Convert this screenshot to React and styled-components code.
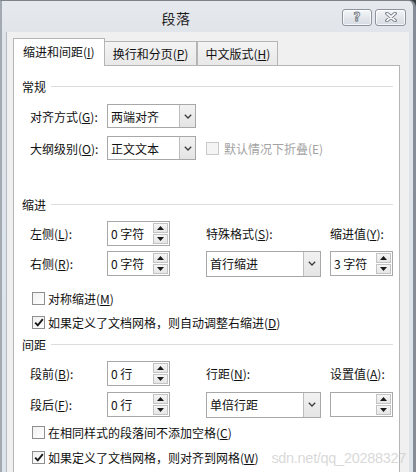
import React from 'react';
import styled, { createGlobalStyle } from 'styled-components';

const Global = createGlobalStyle`
  html, body { margin: 0; padding: 0; background: #3a3d42; }
  body {
    font-family: "Noto Sans CJK SC", "Microsoft YaHei", sans-serif;
    font-size: 12px;
    color: #111;
  }
  * { box-sizing: border-box; }
  u { text-underline-offset: 1px; }
`;

const Window = styled.div`
  position: relative;
  width: 416px;
  height: 472px;
  overflow: hidden;
  display: flex;
  flex-direction: column;
  background: linear-gradient(#e6e9ed, #dfe4ea 40px, #dce3eb);
  border-top: 1px solid #7d838b;
  border-left: 2px solid #a3a9b1;
  border-right: 3px solid #868d96;
  border-top-right-radius: 7px;
`;

const TitleBar = styled.div`
  height: 31px;
  display: flex;
  align-items: center;
  padding: 3px 7px 0 8px;
`;

const Title = styled.div`
  flex: 1;
  text-align: center;
  font-size: 14px;
  color: #1e1e1e;
  letter-spacing: 0.5px;
`;

const CapButtons = styled.div`
  display: flex;
  gap: 3px;
  margin-bottom: 2px;
`;

const CapButton = styled.div`
  width: ${p => p.$w}px;
  height: 17px;
  border: 1px solid #8e949d;
  border-radius: 3px;
  background: linear-gradient(#f4f6f8, #e2e6eb 55%, #d6dbe2);
  box-shadow: inset 0 0 0 1px rgba(255, 255, 255, 0.75);
  display: flex;
  align-items: center;
  justify-content: center;
`;

const HelpGlyph = styled.span`
  font-family: "DejaVu Sans", sans-serif;
  font-weight: bold;
  font-size: 12px;
  line-height: 1;
  color: #f6f7f9;
  -webkit-text-stroke: 0.8px #6c727b;
`;

const Body = styled.div`
  flex: 1;
  display: flex;
  padding: 0 4px 0 4px;
  min-height: 0;
`;

const Client = styled.div`
  flex: 1;
  display: flex;
  flex-direction: column;
  background: #f0f0f0;
  border-left: 1px solid #b3bac3;
  padding: 7px 9px 0 6px;
  min-height: 0;
`;

const TabStrip = styled.div`
  display: flex;
  align-items: flex-end;
  height: 26px;
`;

const Tab = styled.div`
  position: relative;
  height: ${p => (p.$active ? 28 : 24)}px;
  margin-bottom: ${p => (p.$active ? -1 : 0)}px;
  z-index: ${p => (p.$active ? 1 : 0)};
  padding: 0 ${p => p.$pad}px;
  border: 1px solid #b5b5b5;
  border-bottom: none;
  margin-left: ${p => p.$ml || 0}px;
  background: ${p => (p.$active ? '#fff' : 'linear-gradient(#f4f4f4, #e8e8e8)')};
  display: flex;
  align-items: center;
  padding-bottom: ${p => (p.$active ? 2 : 0)}px;
  white-space: nowrap;
`;

const Panel = styled.div`
  flex: 1;
  background: #fff;
  border: 1px solid #b5b5b5;
  border-bottom: none;
  padding: 12px 6px 0 8px;
  display: flex;
  flex-direction: column;
`;

const Heading = styled.div`
  height: 16px;
  display: flex;
  align-items: center;
  gap: 5px;
  margin-top: ${p => p.$mt || 0}px;
  &::after {
    content: '';
    flex: 1;
    height: 1px;
    background: #dddddd;
  }
`;

const GeneralRows = styled.div`
  margin-top: 10px;
  padding-left: 8px;
  display: flex;
  flex-direction: column;
  gap: 8px;
`;

const Row = styled.div`
  display: flex;
  align-items: center;
  height: 24px;
`;

const Label = styled.div`
  width: ${p => (p.$w ? `${p.$w}px` : 'auto')};
  white-space: nowrap;
  color: ${p => (p.$disabled ? '#a3a3a3' : '#111')};
`;

const FieldGrid = styled.div`
  margin-top: 9px;
  padding-left: 8px;
  display: grid;
  grid-template-columns: 77px 99px 124px 63px;
  grid-auto-rows: 25px;
  row-gap: ${p => p.$gap}px;
  align-items: center;
`;

const SelectBox = styled.div`
  width: ${p => p.$w}px;
  height: ${p => p.$h}px;
  border: 1px solid #a8a8a8;
  background: #fff;
  display: flex;
`;

const SelectText = styled.div`
  flex: 1;
  padding-left: 3px;
  display: flex;
  align-items: center;
  white-space: nowrap;
`;

const SelectArrow = styled.div`
  width: ${p => p.$w}px;
  border-left: 1px solid #bdbdbd;
  background: linear-gradient(#f2f2f2, #e4e4e4);
  display: flex;
  align-items: center;
  justify-content: center;
`;

const SpinBox = styled.div`
  width: 63px;
  height: 25px;
  border: 1px solid #a8a8a8;
  background: #fff;
  display: flex;
  padding: 1px;
`;

const SpinText = styled.div`
  flex: 1;
  padding-left: 2px;
  display: flex;
  align-items: center;
  white-space: nowrap;
`;

const SpinButtons = styled.div`
  width: 15px;
  display: flex;
  flex-direction: column;
  gap: 1px;
`;

const SpinButton = styled.div`
  flex: 1;
  border: 1px solid #c3c3c3;
  background: linear-gradient(#f5f5f5, #e6e6e6);
  display: flex;
  align-items: center;
  justify-content: center;
`;

const CheckRow = styled.div`
  margin-top: ${p => p.$mt}px;
  margin-left: ${p => p.$ml}px;
  height: 16px;
  display: flex;
  align-items: center;
  gap: ${p => p.$gap}px;
  white-space: nowrap;
`;

const Box = styled.div`
  width: 13px;
  height: 13px;
  border: 1px solid ${p => (p.$disabled ? '#cacaca' : '#8f8f8f')};
  background: ${p => (p.$disabled ? '#f4f4f4' : 'linear-gradient(135deg, #f0f0f0, #ffffff)')};
  display: flex;
  align-items: center;
  justify-content: center;
`;

const Watermark = styled.div`
  position: absolute;
  right: 7px;
  bottom: 6px;
  font-family: "Liberation Sans", Arial, sans-serif;
  font-size: 14.5px;
  letter-spacing: -0.3px;
  color: rgba(190, 190, 190, 0.6);
  pointer-events: none;
  white-space: nowrap;
`;

const Chevron = () => (
  <svg width="8" height="5" viewBox="0 0 8 5">
    <path d="M0.8 0.8 L4 4 L7.2 0.8" fill="none" stroke="#3c3c3c" strokeWidth="1.3" />
  </svg>
);

const Tri = ({ down }) => (
  <svg width="7" height="4" viewBox="0 0 7 4">
    <path d={down ? 'M0 0 H7 L3.5 4 Z' : 'M0 4 H7 L3.5 0 Z'} fill="#1a1a1a" />
  </svg>
);

const Select = ({ w, h = 24, aw = 16, children }) => (
  <SelectBox $w={w} $h={h}>
    <SelectText>{children}</SelectText>
    <SelectArrow $w={aw}>
      <Chevron />
    </SelectArrow>
  </SelectBox>
);

const Spin = ({ children }) => (
  <SpinBox>
    <SpinText>{children}</SpinText>
    <SpinButtons>
      <SpinButton><Tri /></SpinButton>
      <SpinButton><Tri down /></SpinButton>
    </SpinButtons>
  </SpinBox>
);

const Check = ({ checked, disabled, mt = 0, ml = 10, gap = 3, children }) => (
  <CheckRow $mt={mt} $ml={ml} $gap={gap}>
    <Box $disabled={disabled}>
      {checked && (
        <svg width="10" height="9" viewBox="0 0 10 9">
          <path d="M1.2 4.6 L3.8 7.4 L8.8 1.2" fill="none" stroke="#1a1a1a" strokeWidth="1.9" />
        </svg>
      )}
    </Box>
    <Label $disabled={disabled}>{children}</Label>
  </CheckRow>
);

export default function App() {
  return (
    <>
      <Global />
      <Window>
        <TitleBar>
          <Title>段落</Title>
          <CapButtons>
            <CapButton $w={30}>
              <HelpGlyph>?</HelpGlyph>
            </CapButton>
            <CapButton $w={31}>
              <svg width="12" height="10" viewBox="0 0 12 10">
                <path d="M2 1.5 L10 8.5 M10 1.5 L2 8.5" stroke="#6c727b" strokeWidth="3.6" strokeLinecap="round" />
                <path d="M2 1.5 L10 8.5 M10 1.5 L2 8.5" stroke="#fbfbfc" strokeWidth="1.7" strokeLinecap="round" />
              </svg>
            </CapButton>
          </CapButtons>
        </TitleBar>
        <Body>
          <Client>
            <TabStrip>
              <Tab $active $pad={9}>缩进和间距(<u>I</u>)</Tab>
              <Tab $pad={8} $ml={-1}>换行和分页(<u>P</u>)</Tab>
              <Tab $pad={7}>中文版式(<u>H</u>)</Tab>
            </TabStrip>
            <Panel>
              <Heading>常规</Heading>
              <GeneralRows>
                <Row>
                  <Label $w={77}>对齐方式(<u>G</u>):</Label>
                  <Select w={89}>两端对齐</Select>
                </Row>
                <Row>
                  <Label $w={77}>大纲级别(<u>O</u>):</Label>
                  <Select w={89}>正文文本</Select>
                  <Check disabled ml={10} gap={5}>默认情况下折叠(E)</Check>
                </Row>
              </GeneralRows>

              <Heading $mt={36}>缩进</Heading>
              <FieldGrid $gap={5}>
                <Label>左侧(<u>L</u>):</Label>
                <Spin>0 字符</Spin>
                <Label>特殊格式(<u>S</u>):</Label>
                <Label>缩进值(<u>Y</u>):</Label>
                <Label>右侧(<u>R</u>):</Label>
                <Spin>0 字符</Spin>
                <Select w={115} h={26} aw={17}>首行缩进</Select>
                <Spin>3 字符</Spin>
              </FieldGrid>
              <Check mt={14}>对称缩进(<u>M</u>)</Check>
              <Check mt={8} checked>如果定义了文档网格，则自动调整右缩进(<u>D</u>)</Check>

              <Heading $mt={6}>间距</Heading>
              <FieldGrid $gap={6}>
                <Label>段前(<u>B</u>):</Label>
                <Spin>0 行</Spin>
                <Label>行距(<u>N</u>):</Label>
                <Label>设置值(<u>A</u>):</Label>
                <Label>段后(<u>F</u>):</Label>
                <Spin>0 行</Spin>
                <Select w={115} h={26} aw={17}>单倍行距</Select>
                <Spin />
              </FieldGrid>
              <Check mt={7}>在相同样式的段落间不添加空格(<u>C</u>)</Check>
              <Check mt={9} checked>如果定义了文档网格，则对齐到网格(<u>W</u>)</Check>
            </Panel>
          </Client>
        </Body>
        <Watermark>sdn.net/qq_20288327</Watermark>
      </Window>
    </>
  );
}
